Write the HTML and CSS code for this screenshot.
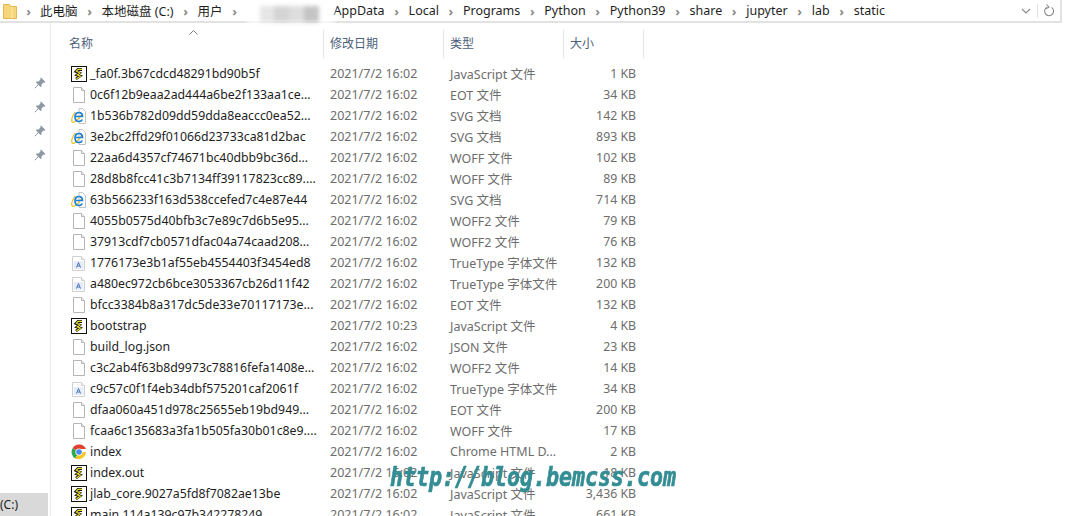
FILE: index.html
```html
<!DOCTYPE html>
<html lang="zh-CN">
<head>
<meta charset="utf-8">
<title>static</title>
<link rel="stylesheet" href="styles.css">
</head>
<body>
<svg class="defs" width="0" height="0" aria-hidden="true">
  <symbol id="i-js" viewBox="0 0 16 16">
    <rect x="0.500" y="0.500" width="15" height="15" fill="#fff" stroke="#111"/>
    <path d="M11 3.500H7L5 5.500 8.500 7 6 9l3 1-4 3" fill="none" stroke="#1c1c1c" stroke-width="2.800"/>
    <path d="M11 3.300H7.200L5.400 5.200 9 7 6.300 8.900l3 1.200-3.800 2.800" fill="none" stroke="#ecdc24" stroke-width="1.200"/>
  </symbol>
  <symbol id="i-file" viewBox="0 0 16 16">
    <path d="M2.500 0.500h8l3 3v12h-11z" fill="#fff" stroke="#b5b5b5"/>
    <path d="M10.500 0.500v3h3" fill="#f1f1f1" stroke="#b5b5b5"/>
  </symbol>
  <symbol id="i-ie" viewBox="0 0 16 16">
    <path d="M8 0.500h3.500l3 3v12H8z" fill="#fff" stroke="#c4c4c4"/>
    <path d="M4 4C1 9 0 13 1.500 14.200c1.500 1 6-2.500 9.500-8.200" fill="none" stroke="#eec22a" stroke-width="1.300"/>
    <path d="M5 8.500h6.500c0-2.500-1.500-4-3.500-4-2.500 0-4 2-4 4.500s1.500 4.500 4 4.500c1.500 0 2.800-.8 3.300-2" fill="none" stroke="#1b80d6" stroke-width="1.700"/>
  </symbol>
  <symbol id="i-ttf" viewBox="0 0 16 16">
    <path d="M1.500 1.500h9l3 3v11h-12z" fill="#fff" stroke="#d0d0d0"/>
    <path d="M10.500 1.500v3h3" fill="#f1f1f1" stroke="#d0d0d0"/>
    <rect x="2.500" y="6" width="10" height="8" fill="#e6edf8"/>
    <path d="M5.500 12.500 7.500 7.500l2 5M6.300 11h2.500" fill="none" stroke="#4a72b4"/>
  </symbol>
  <symbol id="i-chrome" viewBox="0 0 16 16">
    <path d="M8 8 1.600 4.300A7.500 7.500 0 0 1 14.900 5H8z" fill="#e0402f"/>
    <path d="M8 8l-3.700 6.500A7.500 7.500 0 0 1 1.600 4.300z" fill="#2fa84f"/>
    <path d="M8 8h6.900a7.500 7.500 0 0 1-10.600 6.500z" fill="#f6c51f"/>
    <circle cx="8" cy="8" r="3.600" fill="#fff"/>
    <circle cx="8" cy="8" r="2.800" fill="#4a8af0"/>
  </symbol>
  <symbol id="i-pin" viewBox="0 0 12 12">
    <path d="M7 0.500 11.500 5 10.500 5.800 9.500 5.500 7.500 7.500 7.500 9.500 6.500 10 2 5.500 2.500 4.500 4.500 4.500 6.500 2.500 6.300 1.400z" fill="#8d99a3"/>
    <path d="M4 8 0.800 11.200" stroke="#8d99a3" fill="none"/>
  </symbol>
</svg>

<header class="address">
  <svg class="folder" viewBox="0 0 14 16" width="14" height="16">
    <path d="M0.500 1.500h6l1.500 2h5.500v12H.5z" fill="#f7d67a" stroke="#e3b94e"/>
    <path d="M9 4v11.500" stroke="#fbe9ad" fill="none"/>
  </svg>
  <span class="sep first">›</span>
  <span class="crumb">此电脑</span><span class="sep">›</span>
  <span class="crumb">本地磁盘 (C:)</span><span class="sep">›</span>
  <span class="crumb">用户</span><span class="sep">›</span>
  <span class="blur"><i class="b1"></i><i class="b2"></i><i class="b3"></i><i class="b4"></i></span>
  <span class="crumb">AppData</span><span class="sep">›</span>
  <span class="crumb">Local</span><span class="sep">›</span>
  <span class="crumb">Programs</span><span class="sep">›</span>
  <span class="crumb">Python</span><span class="sep">›</span>
  <span class="crumb">Python39</span><span class="sep">›</span>
  <span class="crumb">share</span><span class="sep">›</span>
  <span class="crumb">jupyter</span><span class="sep">›</span>
  <span class="crumb">lab</span><span class="sep">›</span>
  <span class="crumb">static</span>
  <span class="tools">
    <svg class="chev" viewBox="0 0 10 6" width="10" height="6"><path d="M1 1l4 4 4-4" fill="none" stroke="#8a8a8a" stroke-width="1.200"/></svg>
    <svg class="refresh" viewBox="0 0 12 14" width="12" height="14"><path d="M4 3.200a4.500 4.500 0 1 0 4.500 0.200M3.500 0.500 6 3.200 3 4.800" fill="none" stroke="#8a8a8a" stroke-width="1.100"/></svg>
  </span>
</header>

<div class="main">
  <aside class="nav">
    <div class="pins">
      <svg class="pin" width="12" height="12"><use href="#i-pin"/></svg>
      <svg class="pin" width="12" height="12"><use href="#i-pin"/></svg>
      <svg class="pin" width="12" height="12"><use href="#i-pin"/></svg>
      <svg class="pin" width="12" height="12"><use href="#i-pin"/></svg>
    </div>
    <div class="drive">(C:)</div>
  </aside>
  <section class="list">
    <div class="head">
      <div class="hcell hname">名称<svg class="sort" viewBox="0 0 9 5" width="9" height="5"><path d="M.5 4.500l4-4 4 4" fill="none" stroke="#7d7d7d"/></svg></div>
      <div class="hcell">修改日期</div>
      <div class="hcell">类型</div>
      <div class="hcell">大小</div>
    </div>
    <div class="row"><svg class="ic"><use href="#i-js"/></svg><span class="name">_fa0f.3b67cdcd48291bd90b5f</span><span class="meta">2021/7/2 16:02</span><span class="meta">JavaScript 文件</span><span class="size">1 KB</span></div>
    <div class="row"><svg class="ic"><use href="#i-file"/></svg><span class="name">0c6f12b9eaa2ad444a6be2f133aa1ce...</span><span class="meta">2021/7/2 16:02</span><span class="meta">EOT 文件</span><span class="size">34 KB</span></div>
    <div class="row"><svg class="ic"><use href="#i-ie"/></svg><span class="name">1b536b782d09dd59dda8eaccc0ea52...</span><span class="meta">2021/7/2 16:02</span><span class="meta">SVG 文档</span><span class="size">142 KB</span></div>
    <div class="row"><svg class="ic"><use href="#i-ie"/></svg><span class="name">3e2bc2ffd29f01066d23733ca81d2bac</span><span class="meta">2021/7/2 16:02</span><span class="meta">SVG 文档</span><span class="size">893 KB</span></div>
    <div class="row"><svg class="ic"><use href="#i-file"/></svg><span class="name">22aa6d4357cf74671bc40dbb9bc36d...</span><span class="meta">2021/7/2 16:02</span><span class="meta">WOFF 文件</span><span class="size">102 KB</span></div>
    <div class="row"><svg class="ic"><use href="#i-file"/></svg><span class="name">28d8b8fcc41c3b7134ff39117823cc89....</span><span class="meta">2021/7/2 16:02</span><span class="meta">WOFF 文件</span><span class="size">89 KB</span></div>
    <div class="row"><svg class="ic"><use href="#i-ie"/></svg><span class="name">63b566233f163d538ccefed7c4e87e44</span><span class="meta">2021/7/2 16:02</span><span class="meta">SVG 文档</span><span class="size">714 KB</span></div>
    <div class="row"><svg class="ic"><use href="#i-file"/></svg><span class="name">4055b0575d40bfb3c7e89c7d6b5e95...</span><span class="meta">2021/7/2 16:02</span><span class="meta">WOFF2 文件</span><span class="size">79 KB</span></div>
    <div class="row"><svg class="ic"><use href="#i-file"/></svg><span class="name">37913cdf7cb0571dfac04a74caad208...</span><span class="meta">2021/7/2 16:02</span><span class="meta">WOFF2 文件</span><span class="size">76 KB</span></div>
    <div class="row"><svg class="ic"><use href="#i-ttf"/></svg><span class="name">1776173e3b1af55eb4554403f3454ed8</span><span class="meta">2021/7/2 16:02</span><span class="meta">TrueType 字体文件</span><span class="size">132 KB</span></div>
    <div class="row"><svg class="ic"><use href="#i-ttf"/></svg><span class="name">a480ec972cb6bce3053367cb26d11f42</span><span class="meta">2021/7/2 16:02</span><span class="meta">TrueType 字体文件</span><span class="size">200 KB</span></div>
    <div class="row"><svg class="ic"><use href="#i-file"/></svg><span class="name">bfcc3384b8a317dc5de33e70117173e...</span><span class="meta">2021/7/2 16:02</span><span class="meta">EOT 文件</span><span class="size">132 KB</span></div>
    <div class="row"><svg class="ic"><use href="#i-js"/></svg><span class="name">bootstrap</span><span class="meta">2021/7/2 10:23</span><span class="meta">JavaScript 文件</span><span class="size">4 KB</span></div>
    <div class="row"><svg class="ic"><use href="#i-file"/></svg><span class="name">build_log.json</span><span class="meta">2021/7/2 16:02</span><span class="meta">JSON 文件</span><span class="size">23 KB</span></div>
    <div class="row"><svg class="ic"><use href="#i-file"/></svg><span class="name">c3c2ab4f63b8d9973c78816fefa1408e...</span><span class="meta">2021/7/2 16:02</span><span class="meta">WOFF2 文件</span><span class="size">14 KB</span></div>
    <div class="row"><svg class="ic"><use href="#i-ttf"/></svg><span class="name">c9c57c0f1f4eb34dbf575201caf2061f</span><span class="meta">2021/7/2 16:02</span><span class="meta">TrueType 字体文件</span><span class="size">34 KB</span></div>
    <div class="row"><svg class="ic"><use href="#i-file"/></svg><span class="name">dfaa060a451d978c25655eb19bd949...</span><span class="meta">2021/7/2 16:02</span><span class="meta">EOT 文件</span><span class="size">200 KB</span></div>
    <div class="row"><svg class="ic"><use href="#i-file"/></svg><span class="name">fcaa6c135683a3fa1b505fa30b01c8e9....</span><span class="meta">2021/7/2 16:02</span><span class="meta">WOFF 文件</span><span class="size">17 KB</span></div>
    <div class="row"><svg class="ic"><use href="#i-chrome"/></svg><span class="name">index</span><span class="meta">2021/7/2 16:02</span><span class="meta">Chrome HTML D...</span><span class="size">2 KB</span></div>
    <div class="row"><svg class="ic"><use href="#i-js"/></svg><span class="name">index.out</span><span class="meta">2021/7/2 16:02</span><span class="meta">JavaScript 文件</span><span class="size">18 KB</span></div>
    <div class="row"><svg class="ic"><use href="#i-js"/></svg><span class="name">jlab_core.9027a5fd8f7082ae13be</span><span class="meta">2021/7/2 16:02</span><span class="meta">JavaScript 文件</span><span class="size">3,436 KB</span></div>
    <div class="row"><svg class="ic"><use href="#i-js"/></svg><span class="name">main.114a139c97b342278249</span><span class="meta">2021/7/2 16:02</span><span class="meta">JavaScript 文件</span><span class="size">661 KB</span></div>
  </section>
</div>
<div class="mark">http://blog.bemcss.com</div>
</body>
</html>
```

FILE: styles.css
```css
* { box-sizing: border-box; }
html, body { margin: 0; height: 100%; overflow: hidden; background: #fff; }
body {
  position: relative;
  width: 1066px;
  height: 516px;
  font: 12px "Noto Sans", "Noto Sans CJK SC", sans-serif;
  color: #1e1e1e;
}
.defs { position: absolute; }

.address {
  display: flex;
  align-items: center;
  height: 23px;
  width: 1062px;
  padding-left: 3px;
  border-bottom: 2px solid #e2e2e2;
  border-right: 2px solid #e2e2e2;
  white-space: nowrap;
}
.folder { flex: none; }
.crumb { flex: none; color: #1f1f1f; font-size: 12.500px; }
.sep {
  flex: none;
  width: 24px;
  text-align: center;
  color: #8a8a8a;
  font-size: 13px;
  font-weight: 700;
}
.sep.first { width: 23px; }
.blur {
  flex: none;
  display: flex;
  width: 87px;
  height: 25px;
  padding: 8px 15px 0 13px;
  background: #fff;
  filter: blur(2px);
}
.blur i { flex: 1; height: 16px; }
.b1 { background: #e6e6e6; }
.b2 { background: #d4d4d4; }
.b3 { background: #dedede; }
.b4 { background: #c4c4c4; }
.tools {
  margin-left: auto;
  display: flex;
  align-items: center;
  height: 100%;
}
.chev { margin-right: 6px; }
.refresh { box-sizing: content-box; padding: 0 5px; border-left: 1px solid #e2e2e2; }

.main { display: flex; height: 493px; overflow: hidden; }
.nav {
  flex: none;
  position: relative;
  width: 51px;
  border-right: 1px solid #ececec;
}
.pins {
  display: flex;
  flex-direction: column;
  gap: 12px;
  padding: 54px 0 0 34px;
}
.pin { display: block; }
.drive {
  position: absolute;
  left: 0;
  bottom: 0;
  width: 48px;
  height: 23px;
  line-height: 23px;
  background: #d9d9d9;
  white-space: nowrap;
}

.list { flex: none; width: 640px; padding-top: 7px; }
.head {
  display: grid;
  grid-template-columns: 273px 120px 120px 80px;
  height: 27px;
  margin-bottom: 6px;
  color: #4c607a;
}
.hcell {
  position: relative;
  padding-left: 6px;
  line-height: 28px;
  border-right: 1px solid #e5e5e5;
}
.hname { padding-left: 18px; }
.sort { position: absolute; left: 138px; top: 0; }

.row {
  display: grid;
  grid-template-columns: 16px 243px 120px 120px 66px;
  align-items: center;
  height: 21px;
  padding-left: 20px;
  white-space: nowrap;
}
.ic { width: 16px; height: 16px; }
.name { padding-left: 3px; font-size: 12.300px; color: #1e1e1e; }
.meta { color: #6d6d6d; font-size: 12.500px; }
.size { color: #6d6d6d; font-size: 12.300px; text-align: right; }

.mark {
  position: absolute;
  left: 390px;
  top: 459px;
  font: italic 700 27px/36px "DejaVu Sans Mono", monospace;
  color: #338d94;
  -webkit-text-stroke: 0.700px #338d94;
  white-space: nowrap;
  transform: scaleX(0.8);
  transform-origin: left center;
}
```
